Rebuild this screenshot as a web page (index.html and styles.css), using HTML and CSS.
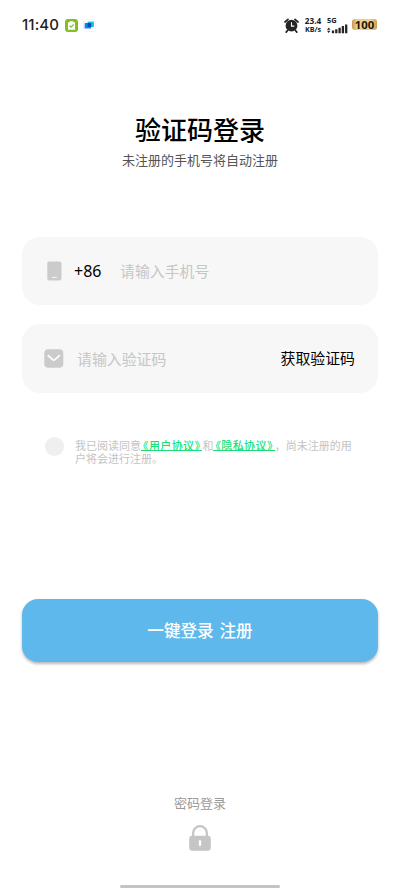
FILE: index.html
```html
<!DOCTYPE html>
<html lang="zh-CN">
<head>
<meta charset="utf-8">
<meta name="viewport" content="width=device-width, initial-scale=1">
<title>验证码登录</title>
<link rel="stylesheet" href="styles.css">
</head>
<body>
<div class="screen">
  <header class="status">
    <span class="time">11:40</span>
    <svg class="app-check" width="13" height="13" viewBox="0 0 13 13"><rect width="13" height="13" rx="3" fill="#83bf20"/><path d="M3 3.2h1.8V2.3h3.4v.9H10v7.5H3z" fill="#fff"/><path d="M4.5 6.7l1.5 1.5 2.7-2.8" fill="none" stroke="#83bf20" stroke-width="1.2"/></svg>
    <svg class="app-blue" width="13" height="13" viewBox="0 0 13 13"><rect x=".5" y=".5" width="12" height="12" rx="2.5" fill="#fff" stroke="#f5f5f5"/><rect x="4.6" y="2.4" width="6.4" height="5.6" rx=".7" fill="#17c9e3"/><rect x="1.6" y="4" width="6.6" height="5.6" rx=".7" fill="#1785f0"/><path d="M4.6 4h3.6v4H4.6z" fill="#0b49b8"/></svg>
    <div class="status-right">
      <svg class="alarm" width="15" height="15" viewBox="0 0 15 15"><circle cx="7.5" cy="7.7" r="5.9" fill="#252525"/><path d="M1 4l3-2.7M14 4l-3-2.7M3.7 12.3l-1.5 1.8M11.3 12.3l1.5 1.8" stroke="#252525" stroke-width="1.7" stroke-linecap="round"/><path d="M7.5 4.3v3.8h2.8" fill="none" stroke="#fff" stroke-width="1.1"/></svg>
      <div class="speed"><span>23.4</span><span class="unit">KB/s</span></div>
      <div class="signal">
        <span>5G</span>
        <svg width="21" height="10" viewBox="0 0 21 10"><path d="M0 5.7l1.7-2.2 1.7 2.2zM0 6.7l1.7 2.2 1.7-2.2z" fill="#252525"/><path d="M6 9.3V6.5M9.3 9.3V5.3M12.6 9.3V3.7M15.9 9.3V2M19.2 9.3V.5" stroke="#252525" stroke-width="2.3"/></svg>
      </div>
      <div class="battery">100</div>
    </div>
  </header>

  <h1 class="title">验证码登录</h1>
  <p class="subtitle">未注册的手机号将自动注册</p>

  <main class="form">
    <div class="field">
      <svg class="phone" width="15" height="20" viewBox="0 0 15 20"><rect x=".3" y=".4" width="14.2" height="19.2" rx="2" fill="#cbcbcb"/><path d="M4.8 16.4h5" stroke="#f7f7f7" stroke-width="1"/></svg>
      <span class="code">+86</span>
      <span class="hint">请输入手机号</span>
    </div>
    <div class="field field-code">
      <svg class="mail" width="20" height="19" viewBox="0 0 20 19"><rect x=".3" y=".3" width="19" height="18.4" rx="4" fill="#cbcbcb"/><path d="M4.2 6.6l4.5 4q1.1.9 2.2 0l4.5-4" fill="none" stroke="#fff" stroke-width="1.7" stroke-linecap="round"/></svg>
      <span class="hint">请输入验证码</span>
      <span class="get-code">获取验证码</span>
    </div>
    <div class="terms">
      <span class="check"></span>
      <p class="terms-text">我已阅读同意<a>《用户协议》</a>和<a>《隐私协议》</a>，尚未注册的用<br>户将会进行注册。</p>
    </div>
    <button class="submit" type="button">一键登录 注册</button>
  </main>

  <footer class="bottom">
    <span class="password">密码登录</span>
    <svg class="lock" width="22" height="26" viewBox="0 0 22 26"><path d="M4.1 12V8.2a6.9 7 0 0 1 13.8 0V12" fill="none" stroke="#c5c5c5" stroke-width="2.3"/><rect x=".2" y="10.7" width="21.6" height="15.1" rx="3" fill="#c5c5c5"/><path d="M11 16.2v3.8" stroke="#fff" stroke-width="2.3" stroke-linecap="round"/></svg>
    <div class="home-bar"></div>
  </footer>
</div>
</body>
</html>
```
FILE: styles.css
```css
* { box-sizing: border-box; }
body {
  margin: 0;
  background: #fff;
  color: #000;
  font-family: "Noto Sans CJK SC", sans-serif;
}
.screen {
  width: 400px;
  height: 889px;
  display: flex;
  flex-direction: column;
  overflow: hidden;
}
.status {
  height: 50px;
  padding: 0 23px 0 22px;
  display: flex;
  align-items: center;
  color: #222;
  font-family: "Open Sans", sans-serif;
}
.time {
  width: 43px;
  font: 500 15px/20px Inter, sans-serif;
  letter-spacing: .1px;
}
.app-blue { margin-left: 5px; }
.status-right {
  margin-left: auto;
  display: flex;
  align-items: center;
}
.speed {
  width: 18px;
  margin-left: 5px;
  display: flex;
  flex-direction: column;
  align-items: center;
  font-size: 8.2px;
  line-height: 8px;
  font-weight: 700;
}
.unit { font-size: 7.2px; }
.signal {
  width: 21px;
  height: 19px;
  margin-left: 5px;
  display: flex;
  flex-direction: column;
  font-size: 7.5px;
  line-height: 8px;
  font-weight: 700;
}
.signal svg { flex: none; }
.battery {
  width: 25px;
  height: 11px;
  margin: 0 0 1px 4px;
  border-radius: 3px;
  background: linear-gradient(90deg, #c79a4c, #efcf90 20%, #efcf90 78%, #c79a4c);
  font: 700 11.3px/11px "Open Sans", sans-serif;
  text-align: center;
  color: #1d1608;
}
.title {
  margin: 60px 0 0;
  font-size: 26px;
  line-height: 38px;
  font-weight: 500;
  text-align: center;
}
.subtitle {
  margin: 2px 0 0;
  font-size: 13px;
  line-height: 20px;
  text-align: center;
  color: #555;
}
.form {
  margin: 67px 22px 0;
  display: flex;
  flex-direction: column;
}
.field {
  height: 68px;
  padding: 0 23px 0 25px;
  display: flex;
  align-items: center;
  border-radius: 18px;
  background: #f7f7f7;
  font-size: 14.9px;
  line-height: 22px;
}
.field-code {
  height: 69px;
  margin-top: 19px;
  padding-left: 22px;
}
.code {
  width: 46px;
  margin-left: 12px;
  font-family: "Noto Sans", sans-serif;
  font-size: 16px;
}
.hint { color: #c6c6c6; }
.field-code .hint { margin-left: 13px; }
.get-code {
  margin-left: auto;
  padding-bottom: 1px;
}
.terms {
  margin: 44px 0 0 23px;
  display: flex;
  align-items: flex-start;
}
.check {
  width: 19px;
  height: 19px;
  border-radius: 50%;
  background: #efefef;
}
.terms-text {
  margin: 2px 0 0 11px;
  font-size: 11px;
  line-height: 13px;
  white-space: nowrap;
  color: #c3c3c3;
}
.terms-text a {
  padding: 0 2px;
  color: #18df78;
  font-weight: 500;
  font-feature-settings: "halt";
  letter-spacing: .4px;
  background: linear-gradient(#18df78, #18df78) 0 calc(100% - 2px) / 100% 1px no-repeat;
}
.submit {
  height: 63px;
  margin-top: 134px;
  padding: 0 0 2px;
  border: 0;
  border-radius: 16px;
  background: #5eb8ec;
  box-shadow: 0 2px 3px rgba(0, 0, 0, .28);
  color: #fff;
  font: 500 16.6px/24px "Noto Sans CJK SC", sans-serif;
  word-spacing: 2px;
}
.bottom {
  margin-top: auto;
  display: flex;
  flex-direction: column;
  align-items: center;
}
.password {
  font-size: 13px;
  line-height: 20px;
  color: #999;
}
.lock { margin-top: 12px; }
.home-bar {
  width: 160px;
  height: 3px;
  margin: 34px 0 1px;
  border-radius: 2px;
  background: #c4c4c4;
}
```
